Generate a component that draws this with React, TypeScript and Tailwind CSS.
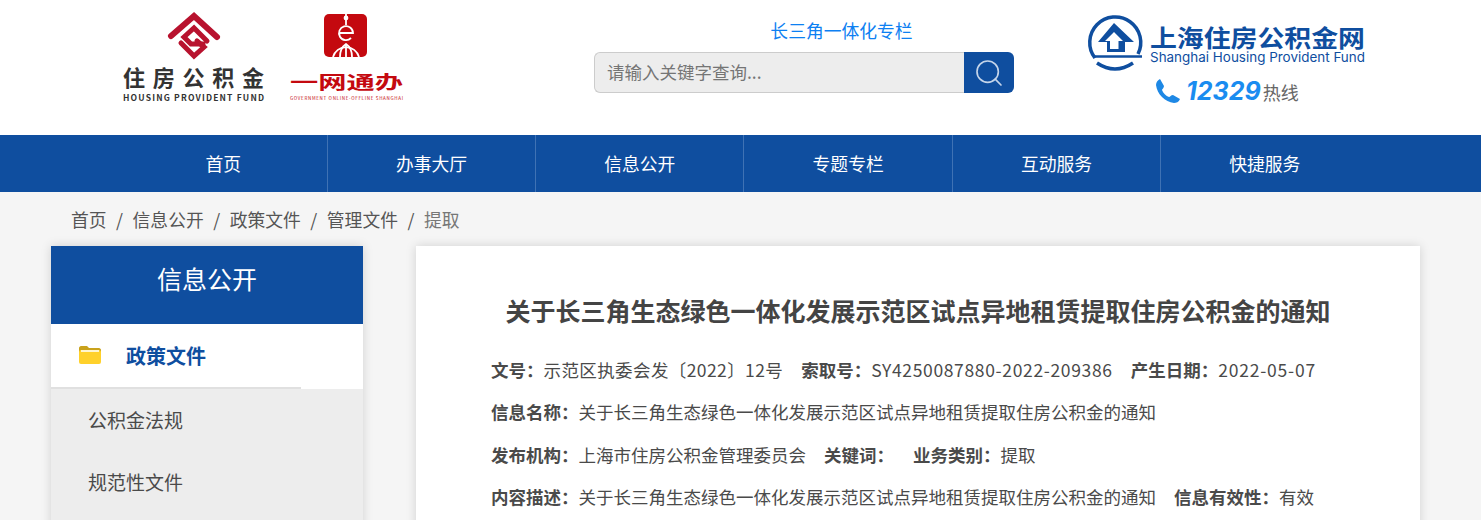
import React from 'react';
import { Search } from 'lucide-react';

const cjk = '"Noto Sans CJK SC", "Noto Sans", sans-serif';

const navItems = ['首页', '办事大厅', '信息公开', '专题专栏', '互动服务', '快捷服务'];
const crumbs = ['首页', '信息公开', '政策文件', '管理文件'];

const FundLogo: React.FC = () => (
  <svg width="150" height="106" viewBox="0 0 150 106" className="shrink-0">
    <g fill="none" stroke="#b8122e" strokeLinejoin="miter" strokeLinecap="round">
      <path d="M51 36 L74 16 L97 37" strokeWidth="6" />
      <path d="M87 41 L74 28 L64 37 L71 44 H83" strokeWidth="5" />
      <path d="M61 43 L74 56 L84 47 L77 41" strokeWidth="5" />
    </g>
    <text x="3" y="86" fontSize="22" fontWeight="700" fill="#333" fontFamily={cjk} textLength="141">住房公积金</text>
    <text x="3" y="100.500" fontSize="8.500" fontWeight="700" fill="#333" fontFamily={cjk} textLength="141">HOUSING PROVIDENT FUND</text>
  </svg>
);

const OnlineLogo: React.FC = () => (
  <svg width="122" height="106" viewBox="0 0 122 106" className="shrink-0">
    <rect x="39" y="14" width="43" height="43" rx="5" fill="#c4090f" />
    <g fill="none" stroke="#fff" strokeWidth="1.800">
      <path d="M61 14 V25" />
      <circle cx="61" cy="18" r="1.500" fill="#fff" />
      <path d="M54 33 H68 A7 7 0 1 0 66 38" />
      <path d="M48 57 A13.500 13.500 0 0 1 74 57" />
      <path d="M61 44 V57" />
      <path d="M55 57 C55 51 58 46 61 44 C64 46 67 51 67 57" />
    </g>
    <text x="5" y="89" fontSize="18" fontWeight="700" fill="#c4090f" fontFamily={cjk} textLength="113" lengthAdjust="spacingAndGlyphs">一网通办</text>
    <text x="5" y="99.500" fontSize="4.500" fill="#c4090f" fontFamily={cjk} textLength="113">GOVERNMENT ONLINE-OFFLINE SHANGHAI</text>
  </svg>
);

const ShanghaiLogo: React.FC = () => (
  <svg width="285" height="60" viewBox="0 0 285 60" className="block">
    <path d="M8 45 A25.500 25.500 0 1 1 51 41" fill="none" stroke="#0f4e9f" strokeWidth="3.500" />
    <path d="M8 43.500 H55" fill="none" stroke="#0f4e9f" strokeWidth="2.500" />
    <path d="M10 50 Q28 62 46 50" fill="none" stroke="#0f4e9f" strokeWidth="3.500" />
    <path d="M27 10 L47 29 H38 V39 H20 V29 H11Z" fill="#0f4e9f" />
    <path d="M27 19 L36 28 H31.500 V36 H23 V28 H18Z" fill="#fff" />
    <text x="63" y="34" fontSize="24" fontWeight="700" fill="#0f4e9f" fontFamily={cjk} textLength="215" lengthAdjust="spacingAndGlyphs">上海住房公积金网</text>
    <text x="63" y="49" fontSize="13.500" fill="#0f4e9f" fontFamily="Inter, sans-serif" textLength="215" lengthAdjust="spacingAndGlyphs">Shanghai Housing Provident Fund</text>
  </svg>
);

const PhoneIcon: React.FC = () => (
  <svg width="26" height="26" viewBox="0 0 26 26" className="shrink-0">
    <path d="M5 1 L9 8 C9 10 7 11 7 12 C8 15 11 18 14 19 C15 19 16 17 18 17 L25 21 C24 24 21 25 19 25 C10 24 2 16 1 7 C1 4 3 2 5 1Z" fill="#1e88e5" />
  </svg>
);

const FolderIcon: React.FC = () => (
  <svg width="24" height="20" viewBox="0 0 24 20" className="-mt-[3px]">
    <path d="M1 3 C1 2 2 1 3 1 H9 L11 3 H21 C22 3 23 4 23 5 V7 H1Z" fill="#c9a21c" />
    <rect x="1" y="5" width="22" height="14" rx="2" fill="#ffd12b" />
    <rect x="3" y="5" width="18" height="2" fill="#fff6cf" />
  </svg>
);

const Label: React.FC<{ children: React.ReactNode }> = ({ children }) => (
  <span className="font-bold">{children}：</span>
);

const App: React.FC = () => {
  return (
    <div className="h-[520px] overflow-hidden bg-[#f5f5f5] text-[#4a4a4a]" style={{ fontFamily: cjk }}>
      <header className="h-[135px] bg-white flex pl-[120px]">
        <FundLogo />
        <div className="ml-[15px]"><OnlineLogo /></div>
        <div className="w-[420px] ml-[187px] pt-[16px]">
          <div className="h-[36px] text-center pl-[75px] text-[17.800px] leading-[28px] text-[#0d80f2]">长三角一体化专栏</div>
          <div className="flex h-[41px]">
            <div className="flex-1 bg-[#ededed] border border-[#cccccc] border-r-0 rounded-l-[6px] pl-[12px] text-[17.500px] leading-[38px] text-[#757575]">请输入关键字查询...</div>
            <div className="w-[50px] bg-[#0f4e9f] rounded-r-[6px] flex items-center justify-center">
              <Search className="h-8 w-8 text-[#c5d5ea]" strokeWidth={1.25} />
            </div>
          </div>
        </div>
        <div className="ml-[73px] pt-[13px]">
          <ShanghaiLogo />
          <div className="flex items-center ml-[68px] mt-[3px]">
            <PhoneIcon />
            <span className="ml-[5px] text-[25px] leading-[30px] font-bold italic text-[#1a8cf0]" style={{ fontFamily: 'Inter, sans-serif' }}>12329</span>
            <span className="ml-[2px] mt-[2px] text-[18px] text-[#666]">热线</span>
          </div>
        </div>
      </header>

      <nav className="h-[57px] bg-[#0f4e9f] pl-[120px]">
        <ul className="flex h-full w-[1249px] -ml-[0.500px]">
          {navItems.map((item, i) => (
            <li
              key={item}
              className={`flex-1 flex items-center justify-center text-[17.800px] text-white border-[#3f72b4] ${i < 5 ? 'border-r' : ''}`}
            >
              {item}
            </li>
          ))}
        </ul>
      </nav>

      <div className="h-[54px] pl-[71px] flex items-center text-[17.800px] text-[#555] pt-[1px]">
        {crumbs.map((c) => (
          <React.Fragment key={c}>
            <span>{c}</span>
            <span className="mx-[9.500px]">/</span>
          </React.Fragment>
        ))}
        <span className="text-[#777]">提取</span>
      </div>

      <div className="flex pl-[51px] items-start">
        <aside className="w-[312px] bg-[#ededed] shadow-[0_0_10px_rgba(0,0,0,0.15)]">
          <div className="h-[78px] bg-[#0f4e9f] text-white text-[25px] leading-[65px] text-center">信息公开</div>
          <div className="h-[65px] bg-white flex items-center pl-[27px] relative">
            <FolderIcon />
            <span className="ml-[24px] text-[20px] font-bold text-[#0f4e9f] -mt-[1px]">政策文件</span>
            <div className="absolute left-0 bottom-0 w-[250px] h-[2px] bg-[#e0e0e0]" />
          </div>
          <div className="h-[62px] pl-[37px] text-[19px] leading-[62px]">公积金法规</div>
          <div className="h-[62px] pl-[37px] text-[19px] leading-[62px]">规范性文件</div>
          <div className="h-[62px]" />
        </aside>

        <main className="ml-[53px] w-[1004px] bg-white shadow-[0_0_10px_rgba(0,0,0,0.15)] px-[75px] pt-[44px] pb-10">
          <h1 className="text-[25px] leading-[40px] font-bold text-center text-[#444] whitespace-nowrap">
            关于长三角生态绿色一体化发展示范区试点异地租赁提取住房公积金的通知
          </h1>
          <div className="mt-[19px] text-[17.500px] leading-[42.300px] whitespace-nowrap">
            <div>
              <Label>文号</Label><span className="tracking-[0.4px]">示范区执委会发〔2022〕12号</span>
              <span className="ml-[18px]"><Label>索取号</Label></span><span className="tracking-[0.65px]">SY4250087880-2022-209386</span>
              <span className="ml-[18px]"><Label>产生日期</Label></span><span className="tracking-[0.8px]">2022-05-07</span>
            </div>
            <div>
              <Label>信息名称</Label>关于长三角生态绿色一体化发展示范区试点异地租赁提取住房公积金的通知
            </div>
            <div>
              <Label>发布机构</Label>上海市住房公积金管理委员会
              <span className="ml-[18px]"><Label>关键词</Label></span>
              <span className="ml-[19px]"><Label>业务类别</Label></span>提取
            </div>
            <div>
              <Label>内容描述</Label>关于长三角生态绿色一体化发展示范区试点异地租赁提取住房公积金的通知
              <span className="ml-[18px]"><Label>信息有效性</Label></span>有效
            </div>
          </div>
        </main>
      </div>
    </div>
  );
};

export default App;
